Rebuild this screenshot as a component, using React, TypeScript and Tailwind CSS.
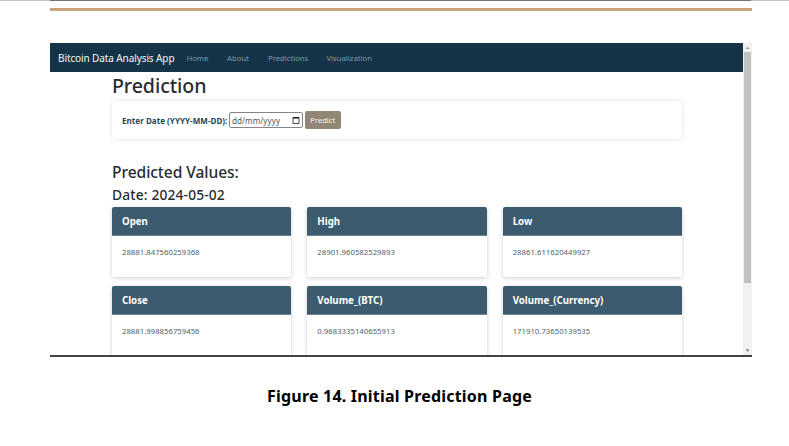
const links = [
  { label: 'Home', style: 'w-[40.5px]' },
  { label: 'About', style: 'w-[41px]' },
  { label: 'Predictions', style: 'w-[58.5px]' },
  { label: 'Visualization', style: 'w-[60px]' },
];

const values = [
  { name: 'Open', value: '28881.847560259368' },
  { name: 'High', value: '28901.960582529893' },
  { name: 'Low', value: '28861.611620449927' },
  { name: 'Close', value: '28881.998856759456' },
  { name: 'Volume_(BTC)', value: '0.9683335140655913' },
  { name: 'Volume_(Currency)', value: '171910.73650139535' },
];

function Navbar() {
  return (
    <nav className="flex h-[29px] shrink-0 items-center bg-[#163448] pt-px pl-2 whitespace-nowrap">
      <span className="w-[128.5px] text-[10px] leading-[15px] tracking-[-0.1px] text-[#f3f6f8]">
        Bitcoin Data Analysis App
      </span>
      {links.map((link) => (
        <a key={link.label} className={`${link.style} text-[7.7px] leading-[14px] text-[#8496a2]`}>
          {link.label}
        </a>
      ))}
    </nav>
  );
}

function DateForm() {
  return (
    <form className="mt-[2px] flex h-[38px] w-[570px] items-center rounded-[4px] bg-white pl-[10px] whitespace-nowrap shadow-[0_0_5px_rgba(0,0,0,0.12)]">
      <label className="w-[107px] pt-px text-[8px] font-bold tracking-[0.05px] text-[#24465a]">Enter Date (YYYY-MM-DD):</label>
      <div className="flex h-[16px] w-[74px] items-center justify-between rounded-[2px] border border-[#858585] pr-[2px] pl-[2px]">
        <span className="text-[8px] leading-[13px] tracking-[0.1px] text-[#555]">dd/mm/yyyy</span>
        <svg width="8" height="9" viewBox="0 0 8 9">
          <path d="M1 1.5h6v6H1z" fill="none" stroke="#333" strokeWidth="0.9" />
          <path d="M1 1.8h6" stroke="#222" strokeWidth="1.6" />
        </svg>
      </div>
      <button type="button" className="ml-[2px] h-[18px] w-[35.5px] rounded-[2px] bg-[#938676] text-[7.6px] leading-[18px] text-[#f4f1ee]">
        Predict
      </button>
    </form>
  );
}

function ValueCard({ name, value }: { name: string; value: string }) {
  return (
    <article className="h-[70px] rounded-[2px] bg-white shadow-[0_1px_4px_rgba(0,0,0,0.2)]">
      <h4 className="h-[29px] rounded-t-[2px] border-b border-[#6d8491] bg-[#3d5b6e] pl-[10px] text-[9.7px] leading-[30px] font-bold text-white">
        {name}
      </h4>
      <p className="pt-[10px] pl-[10px] text-[7.7px] leading-[13px] tracking-[0.04px] text-[#4b5f6d]">{value}</p>
    </article>
  );
}

function Scrollbar() {
  return (
    <div className="flex h-full w-[9px] shrink-0 flex-col items-center bg-[#f1f1f1]">
      <svg width="9" height="9" viewBox="0 0 9 9">
        <path d="M2.5 6 4.5 3.8 6.5 6z" fill="#a3a3a3" />
      </svg>
      <div className="h-[231px] w-[7px] bg-[#c1c1c1]" />
      <svg className="mt-auto" width="9" height="9" viewBox="0 0 9 9">
        <path d="M2.8 3.5h3.4L4.5 5.5z" fill="#505050" />
      </svg>
    </div>
  );
}

export default function App() {
  return (
    <div className="h-[446px] w-[789px] overflow-hidden bg-white font-['Noto_Sans',sans-serif]">
      <div className="h-px bg-[#c4c4c4] px-[50px]">
        <div className="h-px w-[701px] bg-[#757575]" />
      </div>
      <div className="mt-[7px] ml-[50px] h-[3px] w-[702px] bg-[#cba37a]" />
      <section className="mt-[32px] ml-[50px] flex h-[314px] w-[702px] flex-col border-b-2 border-[#444244]">
        <div className="flex h-[312px]">
          <div className="flex min-w-0 flex-1 flex-col overflow-hidden">
            <Navbar />
            <main className="shrink-0 pl-[62px] text-[#292d31]">
              <h1 className="h-[27px] text-[19.6px] leading-[27px] font-medium tracking-[-0.08px]">Prediction</h1>
              <DateForm />
              <h2 className="mt-[22px] h-[23px] text-[15.6px] leading-[23px] font-medium tracking-[-0.07px]">
                Predicted Values:
              </h2>
              <h3 className="mt-[1px] h-[20px] text-[13.8px] leading-[20px] font-medium tracking-[0.15px]">Date: 2024-05-02</h3>
              <div className="mt-[2px] grid w-[570px] grid-cols-3 gap-x-[16px] gap-y-[9px]">
                {values.map((item) => (
                  <ValueCard key={item.name} name={item.name} value={item.value} />
                ))}
              </div>
            </main>
          </div>
          <Scrollbar />
        </div>
      </section>
      <p className="mt-[28px] ml-[267px] text-[16px] leading-[22px] font-bold tracking-[0.2px] whitespace-nowrap text-black">
        Figure 14. Initial Prediction Page
      </p>
    </div>
  );
}
